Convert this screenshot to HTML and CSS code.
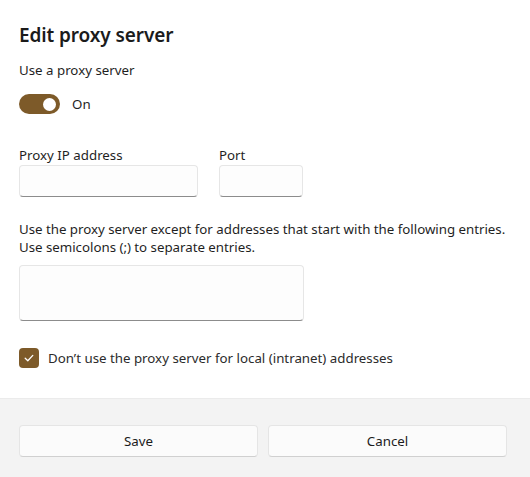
FILE: index.html
```html
<!DOCTYPE html>
<html>
<head>
<meta charset="utf-8">
<link rel="stylesheet" href="styles.css">
</head>
<body>
<div class="dialog">
  <div class="content">
    <h1 class="title">Edit proxy server</h1>
    <div class="label use-label">Use a proxy server</div>
    <div class="toggle-row">
      <span class="toggle"><span class="knob"></span></span>
      <span class="toggle-text">On</span>
    </div>
    <div class="fields">
      <div class="field">
        <div class="label">Proxy IP address</div>
        <div class="input ip"></div>
      </div>
      <div class="field">
        <div class="label">Port</div>
        <div class="input port"></div>
      </div>
    </div>
    <p class="para">Use the proxy server except for addresses that start with the following entries.<br>Use semicolons (;) to separate entries.</p>
    <div class="input area"></div>
    <div class="check-row">
      <span class="checkbox">
        <svg width="12" height="12" viewBox="0 0 12 12"><path d="M2.2 6.3 L4.8 8.8 L9.8 3.4" fill="none" stroke="#fff" stroke-width="1.3" stroke-linecap="round" stroke-linejoin="round"/></svg>
      </span>
      <span class="check-text">Don’t use the proxy server for local (intranet) addresses</span>
    </div>
  </div>
  <div class="footer">
    <button class="btn">Save</button>
    <button class="btn">Cancel</button>
  </div>
</div>
</body>
</html>
```
FILE: styles.css
```css
html, body {
  margin: 0;
  padding: 0;
  background: #ffffff;
}
body {
  font-family: "Noto Sans", "Open Sans", sans-serif;
  color: #1f1f1f;
  width: 530px;
  height: 477px;
  overflow: hidden;
}
.dialog {
  display: flex;
  flex-direction: column;
  height: 477px;
}
.content {
  padding: 0 19px;
  display: flex;
  flex-direction: column;
  height: 398px;
  box-sizing: border-box;
}
.title {
  margin: 21px 0 0 0;
  font-size: 19px;
  font-weight: 600;
  line-height: 28px;
  letter-spacing: -0.1px;
  color: #1b1b1b;
}
.label {
  font-size: 13.3px;
  line-height: 18px;
}
.use-label {
  margin-top: 12px;
}
.toggle-row {
  display: flex;
  align-items: center;
  margin-top: 15px;
  height: 20px;
}
.toggle {
  width: 41px;
  height: 20px;
  border-radius: 10px;
  background: #7d5a29;
  display: flex;
  align-items: center;
  justify-content: flex-end;
  padding-right: 4px;
  box-sizing: border-box;
}
.knob {
  width: 13px;
  height: 13px;
  border-radius: 50%;
  background: #fff;
}
.toggle-text {
  margin-left: 12px;
  font-size: 13.3px;
}
.fields {
  display: flex;
  gap: 21px;
  margin-top: 32px;
}
.field .label {
  margin-bottom: 1px;
}
.input {
  background: #fdfdfd;
  border: 1px solid #e6e6e6;
  border-bottom-color: #8c8c8c;
  border-radius: 4px;
  box-sizing: border-box;
  height: 32px;
}
.ip { width: 179px; }
.port { width: 84px; }
.para {
  margin: 23px 0 0 0;
  font-size: 13.3px;
  line-height: 18px;
  letter-spacing: -0.02px;
}
.area {
  width: 285px;
  height: 56px;
  margin-top: 9px;
}
.check-row {
  display: flex;
  align-items: center;
  margin-top: 27px;
}
.checkbox {
  width: 20px;
  height: 20px;
  border-radius: 4px;
  background: #7d5a29;
  display: flex;
  align-items: center;
  justify-content: center;
}
.check-text {
  margin-left: 9px;
  font-size: 13.3px;
  color: #2b2b2b;
}
.footer {
  flex: 1;
  background: #f3f3f3;
  border-top: 1px solid #ebebeb;
  display: flex;
  gap: 10px;
  padding: 26px 23px 0 19px;
  align-items: flex-start;
}
.btn {
  flex: 1;
  height: 32px;
  background: #fbfbfb;
  border: 1px solid #e5e5e5;
  border-bottom-color: #d0d0d0;
  border-radius: 4px;
  font-family: "Noto Sans", "Open Sans", sans-serif;
  font-size: 13.3px;
  color: #1b1b1b;
  padding: 0;
}
```
